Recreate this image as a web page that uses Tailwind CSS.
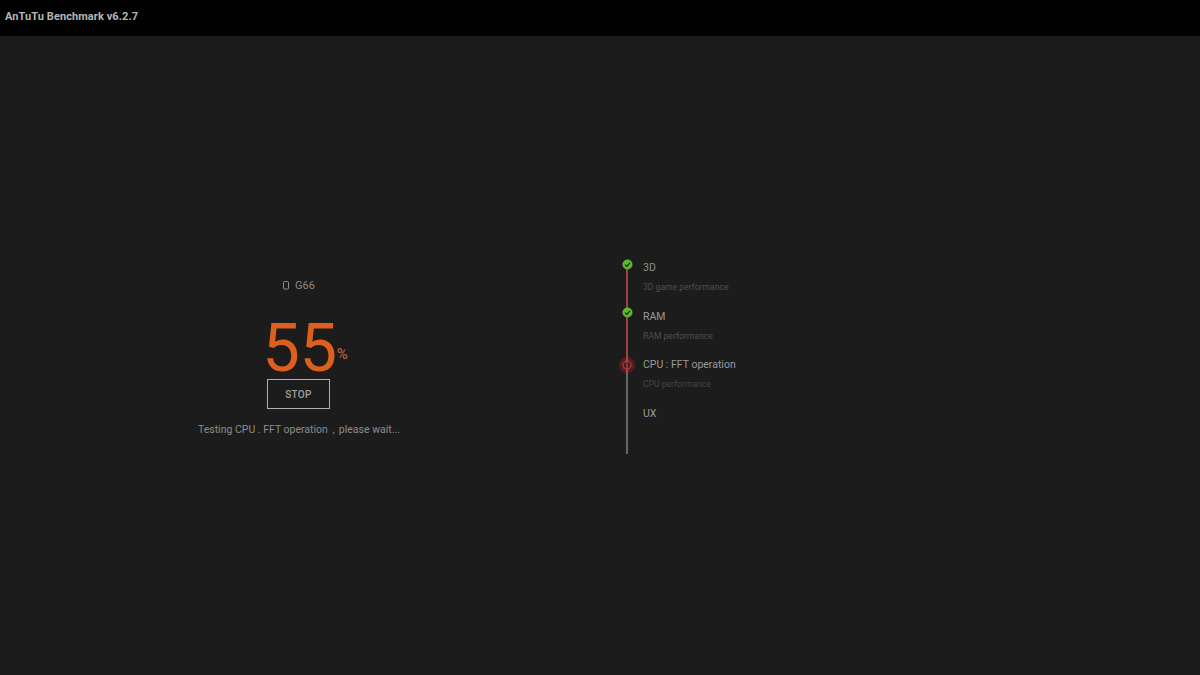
<!DOCTYPE html>
<html>
<head>
<meta charset="utf-8">
<script src="https://cdn.jsdelivr.net/npm/@tailwindcss/browser@4"></script>
</head>
<body class="m-0">
<div class="w-[1200px] h-[675px] overflow-hidden bg-[#1c1c1c] font-['Roboto',sans-serif] flex flex-col">
  <header class="h-[36px] bg-[#020202] shrink-0 flex items-center pl-[5px] pb-[2px]">
    <h1 class="text-[11px] font-bold text-[#b5b5b5] tracking-[0.08px]">AnTuTu Benchmark v6.2.7</h1>
  </header>
  <main class="flex flex-1">
    <section class="w-[598px] shrink-0 flex flex-col items-center pt-[242px]">
      <div class="flex items-center gap-[6px] h-[14px] text-[11px] text-[#8a8a8a] leading-none">
        <svg width="6" height="9" viewBox="0 0 6 9" fill="none"><rect x="0.5" y="0.5" width="5" height="7.5" rx="1" stroke="#8f8f8f" stroke-width="1"/></svg>
        <span>G66</span>
      </div>
      <div class="mt-[26px] h-[60px] flex items-end leading-none pl-[12px]">
        <span class="text-[67px] font-normal text-[#dd5f1e] leading-[60px] tracking-[-0.5px]">55</span>
        <span class="text-[15px] font-medium text-[#b9603f] mb-[16px] leading-none">%</span>
      </div>
      <button class="mt-[1px] mr-[1px] w-[63px] h-[30px] border border-[#b0b0b0] text-[10px] font-medium text-[#a0a0a0] tracking-[0.3px] flex items-center justify-center">STOP</button>
      <p class="mt-[14px] text-[10.5px] text-[#8c8c8c] leading-[14px] whitespace-nowrap">Testing CPU . FFT operation，please wait...</p>
    </section>
    <section class="relative ml-[21px] w-[160px] h-[200px] mt-[224px] flex flex-col">
      <div class="absolute left-[7px] top-[5px] w-[2px] h-[100px] bg-[#9c4246]"></div>
      <div class="absolute left-[7px] top-[105px] w-[2px] h-[89px] bg-[#666666]"></div>

      <div class="h-[48.5px] flex pt-[1px]">
        <div class="w-[24px] shrink-0 relative z-10">
          <svg class="absolute left-[2.5px] top-[-2px]" width="11" height="11" viewBox="0 0 11 11"><circle cx="5.5" cy="5.5" r="5" fill="#5fb82c"/><path d="M3 5.6 L4.9 7.4 L8 3.8" fill="none" stroke="#12240a" stroke-width="1.2"/></svg>
        </div>
        <div>
          <div class="text-[10.5px] text-[#8e8e8e] leading-[14px]">3D</div>
          <div class="text-[8.6px] text-[#4f4f4f] leading-[10px] mt-[7px] whitespace-nowrap">3D game performance</div>
        </div>
      </div>

      <div class="h-[48.5px] flex pt-[1px]">
        <div class="w-[24px] shrink-0 relative z-10">
          <svg class="absolute left-[2.5px] top-[-2.5px]" width="11" height="11" viewBox="0 0 11 11"><circle cx="5.5" cy="5.5" r="5" fill="#5fb82c"/><path d="M3 5.6 L4.9 7.4 L8 3.8" fill="none" stroke="#12240a" stroke-width="1.2"/></svg>
        </div>
        <div>
          <div class="text-[10.5px] text-[#9a9a9a] leading-[14px]">RAM</div>
          <div class="text-[8.6px] text-[#4f4f4f] leading-[10px] mt-[7px] whitespace-nowrap">RAM performance</div>
        </div>
      </div>

      <div class="h-[48.5px] flex pt-[1px]">
        <div class="w-[24px] shrink-0 relative z-10">
          <svg class="absolute left-[-1px] top-[-2px]" width="18" height="18" viewBox="0 0 18 18"><circle cx="9" cy="9" r="8" fill="#a3222a" fill-opacity="0.4"/><circle cx="9" cy="9" r="4" fill="#4a1a1e" stroke="#c7303a" stroke-width="1.2"/><rect x="8" y="0" width="2" height="18" fill="#b0525a" fill-opacity="0.55"/></svg>
        </div>
        <div>
          <div class="text-[10.5px] text-[#9a9a9a] leading-[14px] whitespace-nowrap">CPU : FFT operation</div>
          <div class="text-[8.6px] text-[#454545] leading-[10px] mt-[7px] whitespace-nowrap">CPU performance</div>
        </div>
      </div>

      <div class="flex pt-[1px]">
        <div class="w-[24px] shrink-0"></div>
        <div class="text-[10.5px] text-[#9a9a9a] leading-[14px]">UX</div>
      </div>
    </section>
  </main>
</div>
</body>
</html>
